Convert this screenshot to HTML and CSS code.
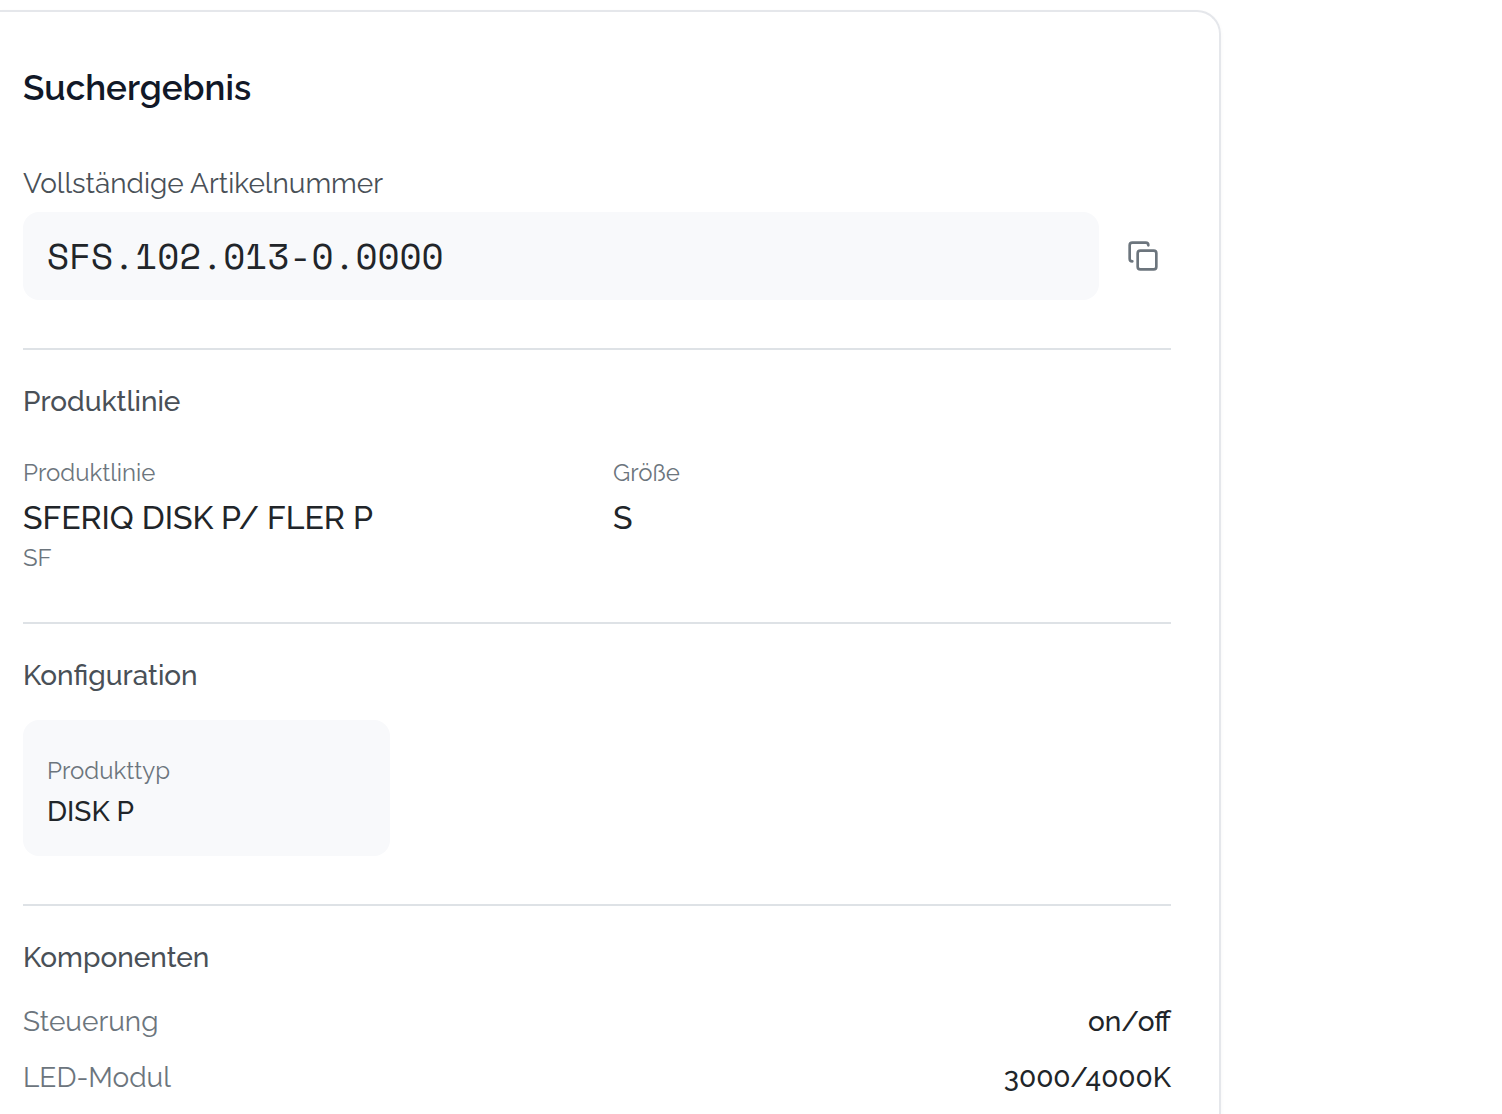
FILE: index.html
```html
<!DOCTYPE html>
<html lang="de">
<head>
<meta charset="utf-8">
<meta name="viewport" content="width=device-width, initial-scale=1">
<title>Suchergebnis</title>
<link rel="stylesheet" href="styles.css">
</head>
<body>
<main class="card">
  <h1 class="card-title">Suchergebnis</h1>
  <section class="article">
    <label class="article-label" for="article-number">Vollständige Artikelnummer</label>
    <div class="article-row">
      <input class="article-number" id="article-number" type="text" value="SFS.102.013-0.0000" readonly>
      <button class="copy" type="button" aria-label="Artikelnummer kopieren">
        <svg width="32" height="32" viewBox="0 0 24 24" fill="none" stroke="currentColor" stroke-width="2" stroke-linecap="round" stroke-linejoin="round" aria-hidden="true"><rect x="8" y="8" width="14" height="14" rx="2" ry="2"/><path d="M4 16c-1.100 0-2-.9-2-2V4c0-1.100.9-2 2-2h10c1.100 0 2 .9 2 2"/></svg>
      </button>
    </div>
  </section>
  <section class="section">
    <h2 class="section-title">Produktlinie</h2>
    <dl class="facts">
      <div>
        <dt class="term">Produktlinie</dt>
        <dd class="value">SFERIQ DISK P/ FLER P</dd>
        <dd class="code">SF</dd>
      </div>
      <div>
        <dt class="term">Größe</dt>
        <dd class="value">S</dd>
      </div>
    </dl>
  </section>
  <section class="section">
    <h2 class="section-title">Konfiguration</h2>
    <dl class="options">
      <div class="option">
        <dt class="term">Produkttyp</dt>
        <dd>DISK P</dd>
      </div>
    </dl>
  </section>
  <section class="section">
    <h2 class="section-title">Komponenten</h2>
    <dl class="components">
      <div class="component"><dt>Steuerung</dt><dd>on/off</dd></div>
      <div class="component"><dt>LED-Modul</dt><dd>3000/4000K</dd></div>
    </dl>
  </section>
</main>
</body>
</html>
```
FILE: styles.css
```css
* { box-sizing: border-box; }
body {
  margin: 0;
  display: flex;
  padding: 10px 281px 0 0;
  background: #fff;
  color: #212529;
  font-family: Raleway, Lato, sans-serif;
  font-size: 28px;
  line-height: 40px;
}
h1, h2, dl, dd { margin: 0; }
h2, dd { font-weight: 500; }
.card {
  flex: 1;
  min-width: 0;
  padding: 48px 48px 0 23px;
  border: 2px solid #e5e7eb;
  border-width: 2px 2px 0 0;
  border-radius: 0 24px 0 0;
  box-shadow: 0 2px 4px rgba(0, 0, 0, 0.04);
}
.card-title { color: #111827; font-size: 35px; line-height: 56px; font-weight: 600; }
.article { padding: 48px 0; }
.article-label { display: block; color: #495057; margin-bottom: 8px; }
.article-row { display: flex; align-items: center; gap: 16px; }
.article-number {
  flex: 1;
  min-width: 0;
  height: 88px;
  padding: 0 24px 2px;
  border: 0;
  border-radius: 16px;
  background: #f8f9fb;
  color: #212529;
  font-family: "Space Mono", "Liberation Mono", monospace;
  font-size: 36px;
}
.copy {
  display: flex;
  padding: 12px;
  border: 0;
  background: none;
  color: #6c757d;
}
.section { padding: 32px 0 48px; border-top: 2px solid #dee2e6; }
.section:last-child { padding-bottom: 16px; }
.section-title { color: #495057; font-size: 28px; line-height: 40px; }
.facts { display: grid; grid-template-columns: 1fr 1fr; gap: 32px; margin-top: 32px; }
.term { margin-bottom: 2px; color: #6c757d; font-size: 24px; line-height: 38px; }
.value { font-size: 32px; line-height: 48px; }
.code { color: #6c757d; font-size: 24px; line-height: 32px; font-weight: 400; }
.options { display: grid; grid-template-columns: repeat(3, 1fr); gap: 24px; margin-top: 24px; }
.option { padding: 32px 24px 24px; border-radius: 16px; background: #f8f9fb; }
.components { display: grid; gap: 16px; margin-top: 24px; }
.component { display: flex; justify-content: space-between; }
.component dt { color: #6c757d; }
```
